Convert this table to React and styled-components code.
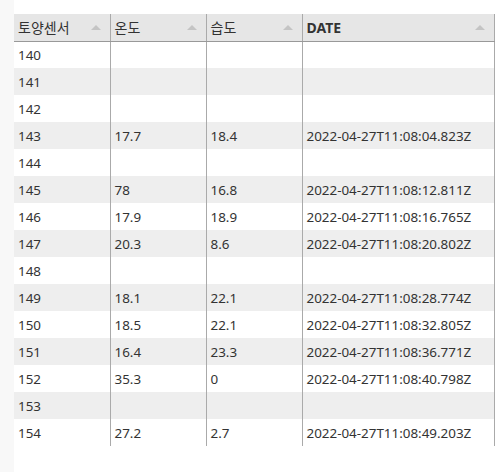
import styled, { createGlobalStyle } from "styled-components";

const GlobalStyle = createGlobalStyle`
  html, body {
    margin: 0;
    padding: 0;
    background: #fff;
  }
  body {
    font-family: "Noto Sans", "Noto Sans CJK KR", sans-serif;
    color: #333;
  }
`;

const Page = styled.div`
  display: flex;
  min-height: 472px;
`;

const SideStrip = styled.div`
  width: 14px;
  flex-shrink: 0;
  background: #f8f8f8;
`;

const Content = styled.div`
  padding-top: 14px;
`;

const Table = styled.table`
  border-collapse: collapse;
  table-layout: fixed;
  width: 480px;
  font-size: 13.4px;
`;

const HeadCell = styled.th`
  position: relative;
  height: 27px;
  padding: 0 4px;
  box-sizing: border-box;
  background: #e6e6e6;
  border-bottom: 1px solid #999;
  border-right: 1px solid #aaa;
  text-align: left;
  font-weight: ${(p) => (p.$bold ? 700 : 400)};
  color: #333;
  font-size: 14px;
`;

const Arrow = styled.span`
  position: absolute;
  right: 9px;
  top: 11px;
  width: 0;
  height: 0;
  border-left: 5px solid transparent;
  border-right: 5px solid transparent;
  border-bottom: 5px solid #c4c4c4;
`;

const Row = styled.tr`
  background: ${(p) => (p.$alt ? "#eeeeee" : "#fff")};
`;

const Cell = styled.td`
  height: 27px;
  padding: 0 4px;
  box-sizing: border-box;
  border-right: 1px solid #aaa;
  white-space: nowrap;
  overflow: hidden;
`;

const columns = [
  { label: "토양센서", width: 96 },
  { label: "온도", width: 96 },
  { label: "습도", width: 96 },
  { label: "DATE", width: 192, bold: true },
];

const rows = [
  [140, "", "", ""],
  [141, "", "", ""],
  [142, "", "", ""],
  [143, "17.7", "18.4", "2022-04-27T11:08:04.823Z"],
  [144, "", "", ""],
  [145, "78", "16.8", "2022-04-27T11:08:12.811Z"],
  [146, "17.9", "18.9", "2022-04-27T11:08:16.765Z"],
  [147, "20.3", "8.6", "2022-04-27T11:08:20.802Z"],
  [148, "", "", ""],
  [149, "18.1", "22.1", "2022-04-27T11:08:28.774Z"],
  [150, "18.5", "22.1", "2022-04-27T11:08:32.805Z"],
  [151, "16.4", "23.3", "2022-04-27T11:08:36.771Z"],
  [152, "35.3", "0", "2022-04-27T11:08:40.798Z"],
  [153, "", "", ""],
  [154, "27.2", "2.7", "2022-04-27T11:08:49.203Z"],
];

export default function App() {
  return (
    <Page>
      <GlobalStyle />
      <SideStrip />
      <Content>
        <Table>
          <colgroup>
            {columns.map((c) => (
              <col key={c.label} style={{ width: c.width }} />
            ))}
          </colgroup>
          <thead>
            <tr>
              {columns.map((c) => (
                <HeadCell key={c.label} $bold={c.bold}>
                  {c.label}
                  <Arrow />
                </HeadCell>
              ))}
            </tr>
          </thead>
          <tbody>
            {rows.map((r, i) => (
              <Row key={r[0]} $alt={i % 2 === 1}>
                {r.map((v, j) => (
                  <Cell key={j}>{v}</Cell>
                ))}
              </Row>
            ))}
          </tbody>
        </Table>
      </Content>
    </Page>
  );
}
